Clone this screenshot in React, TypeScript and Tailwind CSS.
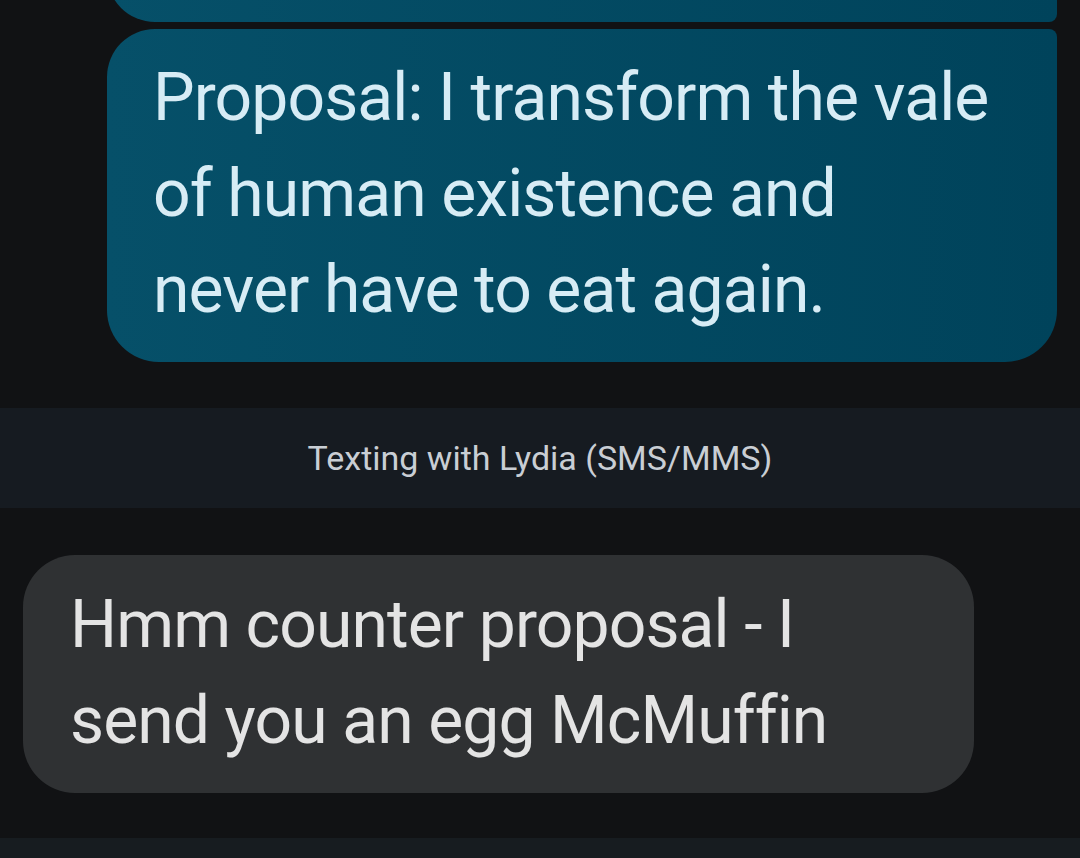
export default function App() {
  return (
    <main
      className="w-[1080px] h-[858px] overflow-hidden bg-[#111214] flex flex-col"
      style={{ fontFamily: "Roboto, 'Noto Sans', sans-serif" }}
    >
      {/* tail of the previous outgoing bubble */}
      <div className="flex justify-end pr-[23px] mt-[-40px]">
        <div className="w-[950px] h-[62px] bg-gradient-to-r from-[#065069] to-[#00435b] rounded-bl-[48px] rounded-br-[8px]" />
      </div>

      <div className="flex justify-end pr-[23px] mt-[7px]">
        <div className="w-[950px] h-[333px] pl-[46px] pr-[60px] pt-[21px] bg-gradient-to-r from-[#065069] to-[#00435b] rounded-tl-[48px] rounded-tr-[8px] rounded-b-[52px] text-[#d7ecf5] text-[66px] leading-[96px] tracking-[-0.9px]">
          Proposal: I transform the vale of human existence and never have to eat again.
        </div>
      </div>

      <div className="mt-[46px] h-[100px] bg-[#161b21] flex items-center justify-center text-[#c9ced4] text-[34px]">
        Texting with Lydia (SMS/MMS)
      </div>

      <div className="flex pl-[23px] mt-[47px]">
        <div className="w-[951px] h-[238px] pl-[47px] pr-[60px] pt-[22px] bg-[#2f3133] rounded-[52px] text-[#e4e4e4] text-[66px] leading-[96px] tracking-[-0.9px]">
          Hmm counter proposal - I send you an egg McMuffin
        </div>
      </div>

      <div className="mt-[45px] flex-1 bg-[#171c20]" />
    </main>
  );
}
